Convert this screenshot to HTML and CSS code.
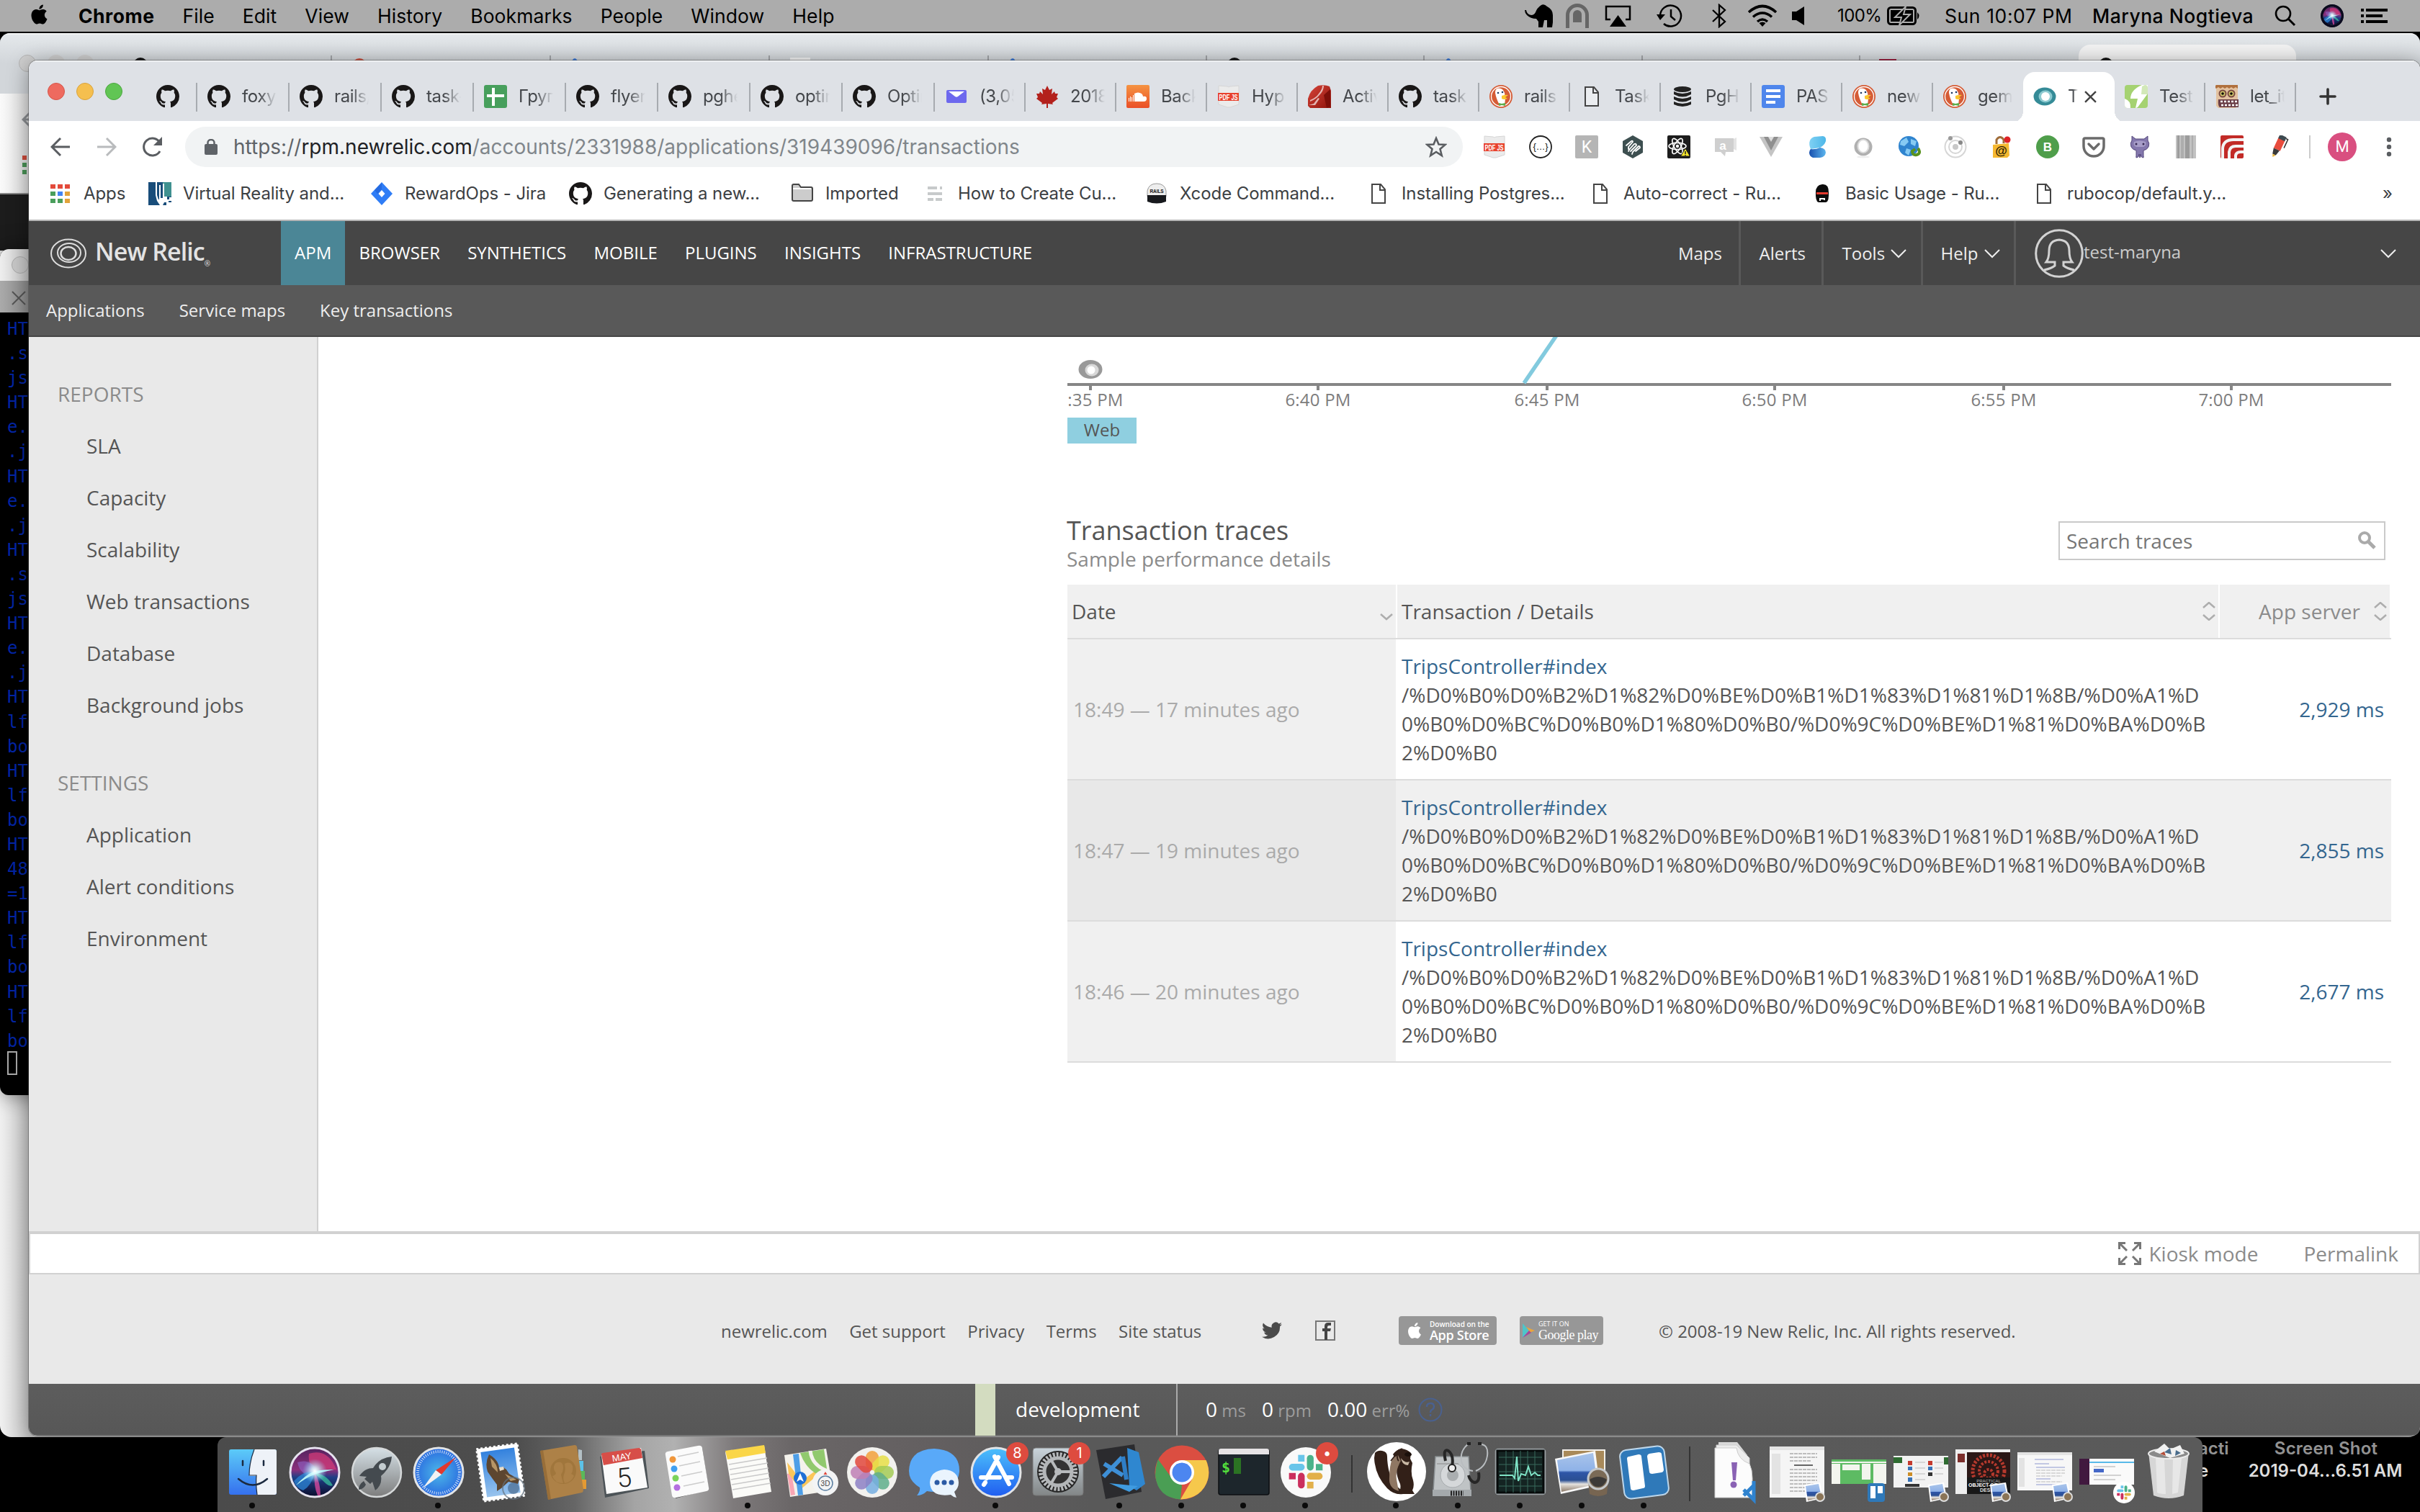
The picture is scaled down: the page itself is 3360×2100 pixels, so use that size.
FILE: index.html
```html
<!DOCTYPE html>
<html lang="en">
<head>
<meta charset="utf-8">
<title>Transactions - New Relic</title>
<link rel="stylesheet" href="styles.css">
</head>
<body>
<svg class="sprite" aria-hidden="true">
  <defs>
    <linearGradient id="gBlue" x1="0" y1="0" x2="0" y2="1"><stop offset="0" stop-color="#4cc0fb"/><stop offset="1" stop-color="#1f5cf0"/></linearGradient>
    <radialGradient id="gSafari"><stop offset="0" stop-color="#4cb8e8"/><stop offset="1" stop-color="#2a6be0"/></radialGradient>
    <linearGradient id="gFinder" x1="0" y1="0" x2="0" y2="1"><stop offset="0" stop-color="#5ccbf8"/><stop offset="1" stop-color="#3570ee"/></linearGradient>
    <linearGradient id="gSilver" x1="0" y1="0" x2="0" y2="1"><stop offset="0" stop-color="#d5e0e6"/><stop offset="1" stop-color="#7d7d7d"/></linearGradient>
    <linearGradient id="gSky" x1="0" y1="0" x2="0" y2="1"><stop offset="0" stop-color="#2f7fdd"/><stop offset="1" stop-color="#9cc6ee"/></linearGradient>
    <linearGradient id="gPhoto" x1="0" y1="0" x2="0" y2="1"><stop offset="0" stop-color="#a9c4ea"/><stop offset=".45" stop-color="#8fb2e8"/><stop offset=".5" stop-color="#2f56a8"/><stop offset=".7" stop-color="#2b4f93"/><stop offset=".8" stop-color="#e6e3df"/><stop offset="1" stop-color="#8d7a68"/></linearGradient>
    <linearGradient id="gVue" x1="0" y1="0" x2="1" y2="0"><stop offset="0" stop-color="#1850ae"/><stop offset="1" stop-color="#5cb6ee"/></linearGradient>
    <linearGradient id="gVueTop" x1="0" y1="0" x2="1" y2="0"><stop offset="0" stop-color="#7fd0f3"/><stop offset="1" stop-color="#4db7e8"/></linearGradient>
    <linearGradient id="gOrange" x1="0" y1="0" x2="0" y2="1"><stop offset="0" stop-color="#f59342"/><stop offset="1" stop-color="#ea4f27"/></linearGradient>
    <linearGradient id="gRuby" x1="0" y1="0" x2="1" y2="1"><stop offset="0" stop-color="#d8453a"/><stop offset="1" stop-color="#8e130b"/></linearGradient>
    <linearGradient id="gGear" x1="0" y1="0" x2="0" y2="1"><stop offset="0" stop-color="#c9d4db"/><stop offset="1" stop-color="#828687"/></linearGradient>
    <radialGradient id="gGlow"><stop offset="0" stop-color="#fff"/><stop offset=".3" stop-color="#d7fbff" stop-opacity=".8"/><stop offset="1" stop-color="#7fd8ff" stop-opacity="0"/></radialGradient>
    <linearGradient id="gSiri" x1="0" y1="0" x2="0" y2="1"><stop offset="0" stop-color="#54235e"/><stop offset=".45" stop-color="#8a2f7c"/><stop offset=".6" stop-color="#1f3f86"/><stop offset="1" stop-color="#0b0c2c"/></linearGradient>
  </defs>
  <symbol id="apple" viewBox="0 0 24 24"><path d="M12.152 6.896c-.948 0-2.415-1.078-3.96-1.04-2.04.027-3.91 1.183-4.961 3.014-2.117 3.675-.546 9.103 1.519 12.09 1.013 1.454 2.208 3.09 3.792 3.039 1.52-.065 2.09-.987 3.935-.987 1.831 0 2.35.987 3.96.948 1.637-.026 2.676-1.48 3.676-2.948 1.156-1.688 1.636-3.325 1.662-3.415-.039-.013-3.182-1.221-3.22-4.857-.026-3.04 2.48-4.494 2.597-4.559-1.429-2.09-3.623-2.324-4.39-2.376-2-.156-3.675 1.09-4.61 1.09zM15.53 3.83c.843-1.012 1.4-2.427 1.245-3.83-1.207.052-2.662.805-3.532 1.818-.78.896-1.454 2.338-1.273 3.714 1.338.104 2.715-.688 3.559-1.701"/></symbol>
  <symbol id="github" viewBox="0 0 16 16"><path fill="#191717" d="M8 0C3.58 0 0 3.58 0 8c0 3.54 2.29 6.53 5.47 7.59.4.07.55-.17.55-.38 0-.19-.01-.82-.01-1.49-2.01.37-2.53-.49-2.69-.94-.09-.23-.48-.94-.82-1.13-.28-.15-.68-.52-.01-.53.63-.01 1.08.58 1.23.82.72 1.21 1.87.87 2.33.66.07-.52.28-.87.51-1.07-1.78-.2-3.64-.89-3.64-3.95 0-.87.31-1.59.82-2.15-.08-.2-.36-1.02.08-2.12 0 0 .67-.21 2.2.82.64-.18 1.32-.27 2-.27s1.36.09 2 .27c1.53-1.04 2.2-.82 2.2-.82.44 1.1.16 1.92.08 2.12.51.56.82 1.27.82 2.15 0 3.07-1.87 3.75-3.65 3.95.29.25.54.73.54 1.48 0 1.07-.01 1.93-.01 2.2 0 .21.15.46.55.38A8.01 8.01 0 0 0 16 8c0-4.42-3.58-8-8-8z"/></symbol>
  <symbol id="sheets" viewBox="0 0 32 32"><rect width="32" height="32" rx="3" fill="#479f5c"/><path d="M11 4h4v9h13v4H15v12h-4V17H4v-4h7z" fill="#fff"/></symbol>
  <symbol id="mailtab" viewBox="0 0 32 32"><rect x="2" y="7" width="28" height="18" rx="2" fill="#6d68ee"/><path d="M5 9h22l-9 7q-2 1.500-4 0z" fill="#fff"/></symbol>
  <symbol id="maple" viewBox="0 0 32 32"><path fill="#b3211c" d="M16 1l3 6 4-2-1 8 4-4 1 3 4 0-2 5 2 2-8 6 1 2-7-1v6h-2v-6l-7 1 1-2-8-6 2-2-2-5 4 0 1-3 4 4-1-8 4 2z"/></symbol>
  <symbol id="cloud" viewBox="0 0 32 32"><rect width="32" height="32" rx="2" fill="url(#gOrange)"/><path fill="#fff" d="M3 18h1v5H3zM5 16h1v7H5zM7 17h1v6H7zM9 14h1v9H9zM11 12q5-3 10 0 2 2 2 4 5-1 5 3 0 4-4 4H11z"/></symbol>
  <symbol id="pdfjs" viewBox="0 0 32 32"><path fill="#ebebeb" stroke="#d5d5d5" d="M2 1l12 1 2 1 2-1 12-1v26l-12 4h-4L2 27z"/><rect x="1" y="11" width="29" height="11" fill="#e8412c"/><text x="15.500" y="20.500" text-anchor="middle" font-family="Liberation Sans" font-weight="700" font-size="11" textLength="26" lengthAdjust="spacingAndGlyphs" fill="#fff">PDF JS</text></symbol>
  <symbol id="ruby" viewBox="0 0 32 32"><path fill="url(#gRuby)" d="M14 1q9-2 16 1l2 6v24H3l-3-3V19q3-12 14-18z"/><path fill="#fff" fill-opacity=".65" d="M3 21q8-3 12-9 5-6 5-11l2 0q0 7-6 13-5 6-13 9zM1 28l7-2 6-8 2 1-6 9z"/><path fill="#7d0f09" d="M22 14l9-8v24l-5 2z"/></symbol>
  <symbol id="duck" viewBox="0 0 32 32"><circle cx="16" cy="16" r="16" fill="#d55c36"/><circle cx="16" cy="16" r="13.500" fill="none" stroke="#fff" stroke-width="1.300"/><path fill="#fff" d="M10 5q8-2 11 6l1 8-1 9q-4 2-7 0Q9 18 8 11q0-4 2-6z"/><path fill="#fbc62d" d="M17 15q6-2 9-1l-4 3 3 2q-5 2-8 0z"/><circle cx="12" cy="11" r="1.300" fill="#1f3a63"/><circle cx="18" cy="10" r="1.300" fill="#1f3a63"/><path fill="#5cae4d" d="M13 25l4 1 5-1v4l-5-1-4 1z"/></symbol>
  <symbol id="doc" viewBox="0 0 32 32"><path fill="#fff" fill-opacity=".4" stroke="#444" stroke-width="2" d="M7 3h12l6 7v19H7z"/><path fill="none" stroke="#444" stroke-width="2" d="M18 3v8h7"/></symbol>
  <symbol id="db" viewBox="0 0 32 32"><g fill="#222"><ellipse cx="16" cy="6" rx="12" ry="4"/><path d="M4 9q12 6 24 0v4q-12 7-24 0zM4 16q12 6 24 0v4q-12 7-24 0zM4 23q12 6 24 0v4q-12 6-24 0z"/></g></symbol>
  <symbol id="gdoc" viewBox="0 0 32 32"><rect width="32" height="32" rx="3" fill="#4f86ec"/><path d="M6 6h20v4H6zM6 14h20v4H6zM6 22h13v4H6z" fill="#fff"/></symbol>
  <symbol id="relic" viewBox="0 0 32 32"><ellipse cx="16" cy="16" rx="15.500" ry="12.500" fill="#358b97"/><ellipse cx="17" cy="16" rx="9.500" ry="8.500" fill="#8ccad0"/><ellipse cx="17" cy="16" rx="6" ry="6" fill="#fff"/></symbol>
  <symbol id="bolt" viewBox="0 0 32 32"><rect width="32" height="32" rx="4" fill="#a5d271"/><path fill="#fff" d="M24 0h8v12L18 31q-2 1-3 1l3-13H8Q8 7 24 0zM0 19q9 3 8 13H4q-4 0-4-4z"/><path fill="#a5d271" d="M24 2l-1 11h9v-9q0-4-4-4z" fill-opacity=".5"/></symbol>
  <symbol id="monster" viewBox="0 0 32 32"><path fill="#e3c2a0" d="M1 3h30v26l-3 3H4l-3-3z"/><path fill="#b0703d" d="M1 0h30v5l-3-2-3 2-3-2-3 2-3-2-3 2-3-2-3 2-3-2-3 2-3-2z"/><circle cx="10" cy="12" r="4.500" fill="#cfc46b" stroke="#7b4b41" stroke-width="2"/><circle cx="22" cy="12" r="4.500" fill="#cfc46b" stroke="#7b4b41" stroke-width="2"/><circle cx="10" cy="12" r="1.800"/><circle cx="22" cy="12" r="1.800"/><path fill="#6b4048" d="M4 20h28v11H6q-3-2-2-11z"/><path stroke="#fff" stroke-width="2.500" stroke-dasharray="3 2" d="M7 23h24M8 28h24"/></symbol>
  <symbol id="jira" viewBox="0 0 32 32"><path fill="#2f7df6" fill-rule="evenodd" d="M16 0l15 16-15 16L1 16zm0 11l-4.500 5 4.500 5 4.500-5z"/><path fill="#1c57c9" d="M16 1v9l-6 6-4-5z" fill-opacity=".5"/></symbol>
  <symbol id="folder" viewBox="0 0 32 32"><path fill="#ccc" stroke="#444" stroke-width="2" d="M2 5q0-2 2-2h7l3 4h14q2 0 2 2v15q0 2-2 2H4q-2 0-2-2z"/><path fill="#fff" d="M3 8h25v2H3z"/></symbol>
  <symbol id="vr" viewBox="0 0 32 32"><rect width="32" height="32" fill="#194d7a"/><path fill="#3f9190" d="M20 0h12v20H20z"/><path fill="#fff" d="M10 0h2v18l2 6h1V4h2v18h3V2h2v18h4v4h3v-3h3v5h-4v6h-3v-4h-3l-2 4h-4l-4-6-2-8zM26 28h6v4h-6z"/></symbol>
  <symbol id="lines" viewBox="0 0 32 32"><path fill="#c7cacb" d="M6 6h13v4H6zM23 6h3v4h-3zM6 14h20v4H6zM6 22h8v4H6zM17 22h9v4h-9z"/></symbol>
  <symbol id="cap" viewBox="0 0 32 32"><path fill="#eee" stroke="#999" d="M3 20V12Q5 2 16 2t13 10v8z"/><path fill="#17191d" d="M3 18h26v9q-13 5-26 0z"/><text x="16" y="15" text-anchor="middle" font-family="Liberation Sans" font-weight="700" font-size="6.500" fill="#111">RAILS</text></symbol>
  <symbol id="robo" viewBox="0 0 32 32"><path fill="#0c0c0c" d="M7 14Q7 4 16 3t9 11v5q0 5-2 8l-2 1H11l-2-1q-2-4-2-8z"/><path fill="#e43a2d" d="M8 14h16v3H8z"/><path fill="#fff" d="M12 22h8v3h-2v-1h-4v2h-2z"/></symbol>
  <symbol id="braces" viewBox="0 0 32 32"><circle cx="16" cy="16" r="15" fill="#fff" stroke="#222" stroke-width="1.800"/><text x="16" y="20" text-anchor="middle" font-family="Liberation Sans" font-size="13" textLength="21" fill="#222">{...}</text></symbol>
  <symbol id="kbox" viewBox="0 0 32 32"><rect width="32" height="32" rx="2" fill="#b5b5b5"/><text x="16" y="24" text-anchor="middle" font-family="Roboto" font-size="23" fill="#fff">K</text></symbol>
  <symbol id="hex" viewBox="0 0 32 32"><path fill="#3d4f50" d="M16 0l14 8v16l-14 8-14-8V8z"/><path fill="none" stroke="#fff" stroke-width="1.800" stroke-linecap="round" d="M7 14l7-6q2-1 2 1l-6 7v3M10 22l1-2 7-8q3-1 3 2l-8 8M15 26l1-3 8-8q2 0 2 2l-6 5"/></symbol>
  <symbol id="react" viewBox="0 0 32 32"><rect width="32" height="32" rx="2" fill="#1c1c1c"/><g fill="none" stroke="#fff" stroke-width="1.600"><ellipse cx="14" cy="15" rx="12" ry="4.600"/><ellipse cx="14" cy="15" rx="12" ry="4.600" transform="rotate(60 14 15)"/><ellipse cx="14" cy="15" rx="12" ry="4.600" transform="rotate(120 14 15)"/></g><circle cx="14" cy="15" r="2.200" fill="#fff"/><path fill="#f5e62c" stroke="#1c1c1c" d="M25 18l6.500 11h-13z"/><path stroke="#222" stroke-width="1.500" d="M25 22v4M25 27v1.500"/></symbol>
  <symbol id="abox" viewBox="0 0 32 32"><path fill="#cfcfcf" d="M2 4h26v19H17l-1 6-6-6H2z"/><path fill="#e3e3e3" d="M28 5l4-2v18l-4-2z"/><text x="13" y="20" text-anchor="middle" font-family="Liberation Sans" font-weight="700" font-size="17" fill="#fff">a</text></symbol>
  <symbol id="vue" viewBox="0 0 32 32"><path fill="#c4c4c4" d="M0 2h32L16 30z"/><path fill="#8f8f8f" d="M6 2h20L16 21z"/><path fill="#ddd" d="M12 2h8l-4 7z"/></symbol>
  <symbol id="bluek" viewBox="0 0 32 32"><path fill="url(#gVueTop)" d="M12 2l12-1q5 1 4 7-2 6-8 9l-13 2Q4 12 6 7q2-4 6-5z"/><path fill="url(#gVue)" d="M7 19q7 1 13-2 8 1 8 7-1 6-8 7H10q-5-2-5-7 0-3 2-5z"/></symbol>
  <symbol id="opera" viewBox="0 0 32 32"><ellipse cx="16" cy="16" rx="12.500" ry="12.500" fill="#b0b0b0"/><ellipse cx="16" cy="15" rx="7.500" ry="9" fill="#fff" stroke="#dcdcdc" stroke-width="2"/><ellipse cx="16" cy="30" rx="9" ry="1.500" fill="#eee"/></symbol>
  <symbol id="globe" viewBox="0 0 32 32"><circle cx="15" cy="15" r="14" fill="#2f84cf"/><path fill="#86caf3" d="M4 8l8-5 3 6-6 6-6-2zM18 5l8 3-2 7-6-3zM12 18l6 2-3 8-5-4z"/><path fill="none" stroke="#5a921f" stroke-width="4" d="M28 18q5 7-2 9-6 1-6-5l4-3"/></symbol>
  <symbol id="orbit" viewBox="0 0 32 32"><g fill="none" stroke="#d6d6d6" stroke-width="2"><circle cx="16" cy="16" r="14.500"/><circle cx="16" cy="16" r="9"/></g><circle cx="16" cy="16" r="4" fill="#c8c8c8"/><circle cx="9" cy="4" r="3" fill="#999"/><circle cx="23" cy="10" r="3" fill="#888"/></symbol>
  <symbol id="lockat" viewBox="0 0 32 32"><path fill="none" stroke="#a06d3a" stroke-width="3" d="M9 12V6q5-7 10 0v5"/><path d="M4 13l22-2 1 17-3 3H4z" fill="#f5b931"/><circle cx="24" cy="6" r="4.500" fill="#de2226"/><text x="15.500" y="27" text-anchor="middle" font-family="Liberation Sans" font-weight="700" font-size="17" fill="#2b1d05">@</text></symbol>
  <symbol id="bgreen" viewBox="0 0 32 32"><circle cx="16" cy="16" r="16" fill="#4f9e4b"/><text x="16" y="22" text-anchor="middle" font-family="Liberation Sans" font-weight="700" font-size="17" fill="#fff">B</text></symbol>
  <symbol id="pocket" viewBox="0 0 32 32"><path fill="none" stroke="#6b6b6b" stroke-width="3.500" d="M4 4h24q2 0 2 2v9a14 14 0 0 1-28 0V6q0-2 2-2z"/><path fill="none" stroke="#6b6b6b" stroke-width="3.500" stroke-linecap="round" stroke-linejoin="round" d="M9 12l7 7 7-7"/></symbol>
  <symbol id="octocat" viewBox="0 0 32 32"><path fill="#8478ad" stroke="#55487c" d="M5 1l5 4h12l5-4v6q3 4 1 9-2 4-7 5v8q1 2-1 2-3-1-3-5 0 5-1 5t-1-5q0 4-3 5-2 0-1-2v-8q-5-1-7-5-2-5 1-9z"/><path fill="#a79dc8" d="M8 9q8-3 16 0 2 5-3 7H11q-5-2-3-7z"/><circle cx="11" cy="12" r="1.500" fill="#372b54"/><circle cx="21" cy="12" r="1.500" fill="#372b54"/></symbol>
  <symbol id="bars" viewBox="0 0 32 32"><path fill="#c2c2c2" d="M2 0h28v32H2z"/><path fill="#9c9c9c" d="M4 0h3v32H4zM15 0h6v32h-6z"/><path fill="#adadad" d="M9 0h4v32H9zM24 0h2v32h-2z"/></symbol>
  <symbol id="redarc" viewBox="0 0 32 32"><rect width="32" height="32" rx="2" fill="#c22b27"/><path fill="none" stroke="#f3f3f3" stroke-width="4" d="M3 32V18Q4 6 18 6h14M12 32V23q1-8 9-8h11M21 32v-4q1-5 7-5h4"/></symbol>
  <symbol id="marker" viewBox="0 0 32 32"><g transform="rotate(25 16 16)"><rect x="11" y="4" width="10" height="16" fill="#e84c3d"/><rect x="11" y="-1" width="10" height="6" fill="#3d4a50"/><path fill="#3a3a3a" d="M11 20h9l-2 8h-5z"/><path fill="#e9b53b" d="M13 28h5l-3 4z"/><path fill="none" stroke="#333" stroke-width="1.500" d="M21 1h3v13"/></g></symbol>
  <symbol id="elephant" viewBox="0 0 40 32"><path d="M0 8l2 0q1 6 7 7 4 0 6-4 2-6 8-10 4-2 8 2 8 4 8 12v10l-1 7h-7v-10h-4l-2 10h-6v-8l-3-4q-8 0-13-5Q0 12 0 8z"/></symbol>
  <symbol id="updown" viewBox="0 0 18 26"><path fill="none" stroke="#adadad" stroke-width="2.500" d="M1 8l8-7 8 7M1 18l8 7 8-7"/></symbol>
  <symbol id="chev" viewBox="0 0 22 14"><path fill="none" stroke="currentColor" stroke-width="2" d="M1 2l10 10L21 2"/></symbol>
  <symbol id="siri" viewBox="0 0 76 76"><circle cx="38" cy="38" r="34" fill="url(#gSiri)" stroke="#e6e3ef" stroke-width="3"/><path fill="#d13b78" fill-opacity=".75" d="M30 12q26-8 38 22-14-2-30 4Q28 26 30 12z"/><path fill="#8f6ad0" fill-opacity=".55" d="M14 24q18-6 28 12l-4 6Q18 44 14 24z"/><path fill="#2a7fd0" fill-opacity=".8" d="M9 50q14-16 29-12-4 18-16 25-10-3-13-13z"/><path fill="#37b59b" fill-opacity=".8" d="M36 38q18 2 27 18-4 2-9-2-8-8-18-16z"/><path fill="#e24aa0" fill-opacity=".75" d="M38 38q8 14 8 32h-4q-6-14-4-32z"/><path fill="#baf3f4" d="M12 56q12-14 26-20 12-2 27-2-14 3-25 6-14 5-28 16z"/><circle cx="38" cy="36" r="17" fill="url(#gGlow)"/></symbol>
  <symbol id="previewmini" viewBox="0 0 30 30"><path fill="#fff" d="M1 4l22-3 4 22-23 5z"/><path fill="url(#gPhoto)" d="M3 6l18-3 4 19-19 4z"/><circle cx="23" cy="21" r="6" fill="#8a7457" stroke="#ddd" stroke-width="2"/></symbol>
  <symbol id="slackmark" viewBox="0 0 54 54"><g fill="none" stroke-width="10.500" stroke-linecap="round"><path stroke="#68c5ea" d="M6 20h14"/><path stroke="#68c5ea" stroke-linecap="butt" d="M15 6h10"/><path stroke="#4bb28a" d="M34 6v14"/><path stroke="#4bb28a" stroke-linecap="butt" d="M48 15v10"/><path stroke="#e2b04a" d="M34 34h14"/><path stroke="#e2b04a" stroke-linecap="butt" d="M29 48h10"/><path stroke="#cb2f5d" d="M20 34v14"/><path stroke="#cb2f5d" stroke-linecap="butt" d="M6 29v10"/></g></symbol>
</svg>

<header class="menubar">
  <svg class="apple-logo" width="27" height="32"><use href="#apple"/></svg>
  <nav class="menus"><b>Chrome</b><span>File</span><span>Edit</span><span>View</span><span>History</span><span>Bookmarks</span><span>People</span><span>Window</span><span>Help</span></nav>
  <div class="status">
    <svg width="40" height="32"><use href="#elephant"/></svg>
    <svg width="32" height="34" viewBox="0 0 32 34"><path fill="none" stroke="#666" stroke-width="5" d="M2.500 34V16a13.500 13.500 0 0 1 27 0v18"/><path fill="#666" d="M10 26V15a6 6 0 0 1 12 0v11z"/></svg>
    <svg width="37" height="30" viewBox="0 0 37 30"><path fill="none" stroke="#000" stroke-width="2.500" d="M8 20H2V2h33v18h-6"/><path d="M18.500 14L30 30H7z"/></svg>
    <svg width="36" height="34" viewBox="0 0 36 34"><path fill="none" stroke="#000" stroke-width="2.500" d="M5 17a14.500 14.500 0 1 1 5 11M20 8v10l6 5"/><path d="M0 15h12l-7 8z"/></svg>
    <svg width="20" height="34" viewBox="0 0 20 34"><path fill="none" stroke="#000" stroke-width="2.300" d="M1 9l17 16-8 7V2l8 7L1 25"/></svg>
    <svg width="42" height="32" viewBox="0 0 42 32"><g fill="none" stroke="#000" stroke-width="3.600"><path d="M2 11q19-17 38 0M8 17.500q13-11 26 0M14 24q7-6 14 0"/></g><path d="M16.500 26q4.500-3 9 0L21 31z"/></svg>
    <svg width="18" height="26" viewBox="0 0 18 26"><path d="M0 7h6l11-7v26L6 19H0z"/></svg>
    <span class="battery-pct">100%</span>
    <svg width="48" height="26" viewBox="0 0 48 26"><rect x="1.500" y="1.500" width="38" height="23" rx="4" fill="none" stroke="#000" stroke-width="3"/><rect x="5" y="5" width="31" height="16"/><path d="M42 8q5 5 0 10z"/><path fill="#000" stroke="#acacac" stroke-width="2" d="M26 0L11 15h9l-3 11 15-15h-9z"/></svg>
    <span class="clock">Sun 10:07 PM</span>
    <span class="user">Maryna Nogtieva</span>
    <svg width="30" height="30" viewBox="0 0 30 30"><circle cx="12" cy="12" r="10" fill="none" stroke="#000" stroke-width="2.600"/><path stroke="#000" stroke-width="3" d="M19 19l9 9"/></svg>
    <svg width="32" height="32" viewBox="0 0 32 32"><circle cx="16" cy="16" r="16" fill="#0a0a1e"/><use href="#siri" x="1" y="1" width="30" height="30"/><circle cx="16" cy="16" r="14" fill="none" stroke="#0a0a1e" stroke-width="3"/></svg>
    <svg width="37" height="20" viewBox="0 0 37 20"><path d="M0 0h4v4H0zM7 0h30v4H7zM0 8h4v4H0zM7 8h23v4H7zM0 16h4v4H0zM7 16h30v4H7z"/></svg>
  </div>
</header>

<section class="win back-window">
  <div class="back-tabs">
    <i class="back-light"></i>
    <span></span><span><i class="peek dark"></i></span><span><i class="peek red"></i></span><span><i class="peek blue"></i></span><span><i class="peek white"></i></span><span><i class="peek blue"></i></span><span><i class="peek dark"></i></span><span><i class="peek blue"></i></span><span></span><span class="last"><i class="peek crimson"></i></span><span class="front"><i class="peek dark"></i></span>
  </div>
  <div class="back-tools"><svg width="20" height="170" viewBox="0 0 20 170"><path fill="none" stroke="#8b8e92" stroke-width="3" d="M12 26L2 36l10 10M2 36h18"/><path fill="#ce4b3b" d="M1 86h6v6H1z"/><path fill="#4a9457" d="M1 96h6v6H1zM1 106h6v6H1z"/></svg></div>
  <div class="back-dark"></div>
</section>

<section class="win terminal">
  <div class="term-title"><i></i></div>
  <div class="term-tab"><svg width="20" height="20" viewBox="0 0 20 20"><path stroke="#555" stroke-width="2" d="M1 1l18 18M19 1L1 19"/></svg></div>
<pre>HT
.s
js
HT
e.
.j
HT
e.
.j
HT
.s
js
HT
e.
.j
HT
lf
bo
HT
lf
bo
HT
48
=1
HT
lf
bo
HT
lf
bo</pre>
  <i class="cursor"></i>
</section>

<main class="win browser">
  <div class="tabstrip">
    <div class="lights"><i class="r"></i><i class="y"></i><i class="g"></i></div>
    <div class="tab pinned"><svg><use href="#github"/></svg></div>
    <div class="tab"><svg><use href="#github"/></svg><span>foxy</span></div>
    <div class="tab"><svg><use href="#github"/></svg><span>rails/</span></div>
    <div class="tab"><svg><use href="#github"/></svg><span>task-</span></div>
    <div class="tab"><svg><use href="#sheets"/></svg><span>Групп</span></div>
    <div class="tab"><svg><use href="#github"/></svg><span>flyers</span></div>
    <div class="tab"><svg><use href="#github"/></svg><span>pghe</span></div>
    <div class="tab"><svg><use href="#github"/></svg><span>optim</span></div>
    <div class="tab"><svg><use href="#github"/></svg><span>Optim</span></div>
    <div class="tab narrow"><svg><use href="#mailtab"/></svg><span>(3,05</span></div>
    <div class="tab narrow"><svg><use href="#maple"/></svg><span>2018</span></div>
    <div class="tab narrow"><svg><use href="#cloud"/></svg><span>Back</span></div>
    <div class="tab narrow"><svg><use href="#pdfjs"/></svg><span>Hyp</span></div>
    <div class="tab narrow"><svg><use href="#ruby"/></svg><span>Activ</span></div>
    <div class="tab narrow"><svg><use href="#github"/></svg><span>task</span></div>
    <div class="tab narrow"><svg><use href="#duck"/></svg><span>rails</span></div>
    <div class="tab narrow"><svg><use href="#doc"/></svg><span>Task</span></div>
    <div class="tab narrow"><svg><use href="#db"/></svg><span>PgH</span></div>
    <div class="tab narrow"><svg><use href="#gdoc"/></svg><span>PAS</span></div>
    <div class="tab narrow"><svg><use href="#duck"/></svg><span>new</span></div>
    <div class="tab narrow before"><svg><use href="#duck"/></svg><span>gem</span></div>
    <div class="tab current"><svg><use href="#relic"/></svg><span>T</span><svg class="close" viewBox="0 0 16 16"><path stroke="#444" stroke-width="2.300" d="M1 1l14 14M15 1L1 15"/></svg></div>
    <div class="tab narrow"><svg><use href="#bolt"/></svg><span>Test</span></div>
    <div class="tab narrow"><svg><use href="#monster"/></svg><span>let_it</span></div>
    <svg class="plus" width="24" height="24" viewBox="0 0 24 24"><path stroke="#333" stroke-width="3.600" stroke-linecap="round" d="M12 2v20M2 12h20"/></svg>
  </div>
  <div class="toolbar">
    <svg width="28" height="28" viewBox="0 0 28 28"><path fill="none" stroke="#5a5d61" stroke-width="3" d="M14 2L2 14l12 12M2 14h25"/></svg>
    <svg width="28" height="28" viewBox="0 0 28 28"><path fill="none" stroke="#b9bbbd" stroke-width="3" d="M14 2l12 12-12 12M26 14H1"/></svg>
    <svg width="28" height="28" viewBox="0 0 28 28"><path fill="none" stroke="#5a5d61" stroke-width="3" d="M24 20a12 12 0 1 1 0-12"/><path fill="#5a5d61" d="M27 0v12H15z"/></svg>
    <div class="omnibox">
      <svg width="18" height="22" viewBox="0 0 18 22"><rect y="7" width="18" height="15" rx="2" fill="#5f6368"/><path fill="none" stroke="#5f6368" stroke-width="2.500" d="M4.500 8V5a4.500 4 0 0 1 9 0v3"/></svg>
      <p>https://<b>rpm.newrelic.com</b><span>/accounts/2331988/applications/319439096/transactions</span></p>
      <svg width="30" height="30" viewBox="0 0 30 30"><path fill="none" stroke="#5a5d61" stroke-width="2.600" d="M15 3l3.500 8.500 9 .5-7 6 2.300 9L15 22l-7.800 5 2.300-9-7-6 9-.5z"/></svg>
    </div>
    <div class="extensions">
      <svg><use href="#pdfjs"/></svg><svg><use href="#braces"/></svg><svg><use href="#kbox"/></svg><svg><use href="#hex"/></svg><svg><use href="#react"/></svg><svg><use href="#abox"/></svg><svg><use href="#vue"/></svg><svg><use href="#bluek"/></svg><svg><use href="#opera"/></svg><svg><use href="#globe"/></svg><svg><use href="#orbit"/></svg><svg><use href="#lockat"/></svg><svg><use href="#bgreen"/></svg><svg><use href="#pocket"/></svg><svg><use href="#octocat"/></svg><svg><use href="#bars"/></svg><svg><use href="#redarc"/></svg><svg><use href="#marker"/></svg>
    </div>
    <i class="tool-sep"></i><span class="profile">M</span>
    <svg width="8" height="28" viewBox="0 0 8 28"><g fill="#5a5d61"><circle cx="4" cy="4" r="3.200"/><circle cx="4" cy="14" r="3.200"/><circle cx="4" cy="24" r="3.200"/></g></svg>
  </div>
  <div class="bookmarks">
    <div class="bm apps"><svg viewBox="0 0 28 28"><path fill="#e34a3b" d="M0 1h7v6H0zM10 1h7v6h-7zM20 1h7v6h-7z"/><path fill="#4a9e5c" d="M0 11h7v6H0zM0 21h7v6H0zM10 21h7v6h-7z"/><path fill="#4285f4" d="M10 11h7v6h-7z"/><path fill="#e2a33b" d="M20 11h7v6h-7zM20 21h7v6h-7z"/></svg><span>Apps</span></div>
    <div class="bm"><svg><use href="#vr"/></svg><span>Virtual Reality and...</span></div>
    <div class="bm jira"><svg><use href="#jira"/></svg><span>RewardOps - Jira</span></div>
    <div class="bm"><svg><use href="#github"/></svg><span>Generating a new...</span></div>
    <div class="bm imported"><svg><use href="#folder"/></svg><span>Imported</span></div>
    <div class="bm"><svg><use href="#lines"/></svg><span>How to Create Cu...</span></div>
    <div class="bm"><svg><use href="#cap"/></svg><span>Xcode Command...</span></div>
    <div class="bm"><svg><use href="#doc"/></svg><span>Installing Postgres...</span></div>
    <div class="bm"><svg><use href="#doc"/></svg><span>Auto-correct - Ru...</span></div>
    <div class="bm"><svg><use href="#robo"/></svg><span>Basic Usage - Ru...</span></div>
    <div class="bm"><svg><use href="#doc"/></svg><span>rubocop/default.y...</span></div>
    <span class="more">»</span>
  </div>

  <div class="topnav">
    <div class="brand"><svg width="50" height="42" viewBox="0 0 50 42"><g fill="none" stroke="#ddd" stroke-width="2"><ellipse cx="25" cy="21" rx="24" ry="19.500"/><ellipse cx="26" cy="20" rx="16" ry="13"/><ellipse cx="25" cy="21" rx="10.500" ry="9" stroke-width="2.500"/></g></svg><b>New Relic</b><small>®</small></div>
    <nav><a class="on">APM</a><a>BROWSER</a><a>SYNTHETICS</a><a>MOBILE</a><a>PLUGINS</a><a>INSIGHTS</a><a>INFRASTRUCTURE</a></nav>
    <div class="utils"><a>Maps</a><a>Alerts</a><a>Tools<svg width="22" height="14"><use href="#chev"/></svg></a><a>Help<svg width="22" height="14"><use href="#chev"/></svg></a>
      <div class="account"><svg width="68" height="68" viewBox="0 0 68 68"><g fill="none" stroke="#d2d2d2" stroke-width="3"><circle cx="34" cy="34" r="32.300"/><path d="M13 57q10-2 15-6v-5H16q4-5 4-16 0-14 14-15 14 1 14 15 0 11 4 16H40v5q5 4 15 6"/></g></svg><span>test-maryna</span><svg width="22" height="14"><use href="#chev"/></svg></div>
    </div>
  </div>
  <div class="subnav"><a>Applications</a><a>Service maps</a><a>Key transactions</a></div>

  <div class="content">
    <aside>
      <h3>REPORTS</h3><a>SLA</a><a>Capacity</a><a>Scalability</a><a>Web transactions</a><a>Database</a><a>Background jobs</a>
      <h3 class="second">SETTINGS</h3><a>Application</a><a>Alert conditions</a><a>Environment</a>
    </aside>
    <article>
      <svg class="chart" width="1840" height="108" viewBox="0 0 1840 108">
        <path fill="#868686" d="M0 64h1838v4H0zM30 68h4v6h-4zM346 68h4v6h-4zM664 68h4v6h-4zM980 68h4v6h-4zM1298 68h4v6h-4zM1614 68h4v6h-4z"/>
        <path stroke="#82cade" stroke-width="5.500" d="M634 64L679-2"/>
        <ellipse cx="32" cy="45" rx="16.500" ry="13" fill="#999"/><ellipse cx="34" cy="46" rx="9.500" ry="8.500" fill="#d8d8d8"/><ellipse cx="33" cy="46" rx="5.500" ry="5.500" fill="#fff"/>
        <g class="ticks"><text x="32" y="96">6:35 PM</text><text x="348" y="96">6:40 PM</text><text x="666" y="96">6:45 PM</text><text x="982" y="96">6:50 PM</text><text x="1300" y="96">6:55 PM</text><text x="1616" y="96">7:00 PM</text></g>
      </svg>
      <div class="legend">Web</div>
      <div class="section-head">
        <div><h2>Transaction traces</h2><p>Sample performance details</p></div>
        <div class="search">Search traces<svg width="26" height="26" viewBox="0 0 26 26"><circle cx="9" cy="9" r="7" fill="none" stroke="#aaa" stroke-width="4"/><path stroke="#aaa" stroke-width="5" d="M14 14l9 9"/></svg></div>
      </div>
      <div class="table">
        <div class="tr head"><div>Date<svg class="down" width="18" height="10" viewBox="0 0 18 10"><path fill="none" stroke="#adadad" stroke-width="2.500" d="M1 1l8 7 8-7"/></svg></div><div>Transaction / Details<svg width="18" height="26"><use href="#updown"/></svg></div><div class="srv">App server<svg width="18" height="26"><use href="#updown"/></svg></div></div>
        <div class="tr"><div class="date">18:49 — 17 minutes ago</div><div class="det"><a>TripsController#index</a><br>/%D0%B0%D0%B2%D1%82%D0%BE%D0%B1%D1%83%D1%81%D1%8B/%D0%A1%D<br>0%B0%D0%BC%D0%B0%D1%80%D0%B0/%D0%9C%D0%BE%D1%81%D0%BA%D0%B<br>2%D0%B0</div><div class="ms">2,929 ms</div></div>
        <div class="tr alt"><div class="date">18:47 — 19 minutes ago</div><div class="det"><a>TripsController#index</a><br>/%D0%B0%D0%B2%D1%82%D0%BE%D0%B1%D1%83%D1%81%D1%8B/%D0%A1%D<br>0%B0%D0%BC%D0%B0%D1%80%D0%B0/%D0%9C%D0%BE%D1%81%D0%BA%D0%B<br>2%D0%B0</div><div class="ms">2,855 ms</div></div>
        <div class="tr"><div class="date">18:46 — 20 minutes ago</div><div class="det"><a>TripsController#index</a><br>/%D0%B0%D0%B2%D1%82%D0%BE%D0%B1%D1%83%D1%81%D1%8B/%D0%A1%D<br>0%B0%D0%BC%D0%B0%D1%80%D0%B0/%D0%9C%D0%BE%D1%81%D0%BA%D0%B<br>2%D0%B0</div><div class="ms">2,677 ms</div></div>
      </div>
    </article>
  </div>

  <div class="kiosk"><svg width="32" height="32" viewBox="0 0 32 32"><g fill="none" stroke="#777" stroke-width="3"><path d="M1.500 10V1.500H10M2 2l10 10M22 1.500h8.500V10M30 2L20 12M1.500 22v8.500H10M2 30l10-10M22 30.500h8.500V22M30 30L20 20"/></g></svg><span>Kiosk mode</span><span class="permalink">Permalink</span></div>
  <footer>
    <div class="links"><a>newrelic.com</a><a>Get support</a><a>Privacy</a><a>Terms</a><a>Site status</a></div>
    <svg class="tw" width="28" height="26" viewBox="0 0 24 20"><path fill="#4a4a4a" d="M24 2.500a10 10 0 0 1-2.800.8A5 5 0 0 0 23.300.6a10 10 0 0 1-3.100 1.200A4.900 4.900 0 0 0 11.800 6.300 14 14 0 0 1 1.700 1.100a4.900 4.900 0 0 0 1.500 6.600A5 5 0 0 1 1 7.100a4.900 4.900 0 0 0 4 4.900 5 5 0 0 1-2.300.1 4.900 4.900 0 0 0 4.600 3.400A9.900 9.900 0 0 1 0 17.500 14 14 0 0 0 21.500 5 10 10 0 0 0 24 2.500z"/></svg>
    <svg class="fb" width="28" height="28" viewBox="0 0 28 28"><rect x="1" y="1" width="26" height="26" fill="none" stroke="#777" stroke-width="2"/><path fill="#444" d="M13 27V15h-3v-4h3V8q0-5 5-5h4v4h-3q-2 0-2 2v2h5l-1 4h-4v12z"/></svg>
    <div class="store"><svg width="22" height="26"><use href="#apple"/></svg><p><small>Download on the</small>App Store</p></div>
    <div class="store play"><svg width="18" height="20" viewBox="0 0 18 20"><path fill="#4fc4c9" d="M0 0l9 10-9 10z"/><path fill="#e8a53f" d="M5 5l12 5-12 5 4-5z"/><path fill="#a4479b" d="M0 20l9-10 3 3z"/></svg><p><small>GET IT ON</small>Google play</p></div>
    <span class="copy">© 2008-19 New Relic, Inc. All rights reserved.</span>
  </footer>
  <div class="metrics"><i class="health"></i><span class="env">development</span><i class="line"></i>
    <p><b>0</b> ms</p><p><b>0</b> rpm</p><p><b>0.00</b> err%</p>
    <svg width="34" height="34" viewBox="0 0 34 34"><circle cx="17" cy="17" r="15.500" fill="none" stroke="#4a618f" stroke-width="2"/><path fill="none" stroke="#4a618f" stroke-width="2.500" d="M12 13q0-5 5-5t5 4.500q0 3-3 4.500-2 1-2 4M17 23v3"/></svg>
  </div>
</main>

<div class="desktop-label one"><span>acti</span><span>e</span></div>
<div class="desktop-label two"><span>Screen Shot</span><span>2019-04...6.51 AM</span></div>

<section class="dock">
  <div class="app run"><svg viewBox="0 0 76 76"><rect x="5" y="6" width="66" height="63" rx="3" fill="url(#gFinder)"/><path fill="#eef2f8" d="M40 6h28q3 0 3 3v57q0 3-3 3H44q-2-12-1-26h-10Q33 24 40 6z"/><path fill="none" stroke="#1b2a40" stroke-width="2.500" stroke-linecap="round" d="M24 22v6M53 22v6M18 47q20 17 40 0"/><path fill="none" stroke="#1b2a40" stroke-width="1.200" d="M40 6q-7 18-7 36h10q-1 14 1 27"/></svg></div>
  <div class="app"><svg><use href="#siri"/></svg></div>
  <div class="app"><svg viewBox="0 0 76 76"><circle cx="38" cy="38" r="34" fill="url(#gSilver)" stroke="#d6d9da" stroke-width="2.500"/><path fill="#444a4f" d="M59 16q-18 2-26 16-12 0-19 11l10 1-3 3 8 7 3-3 4 12q10-8 8-20 14-12 15-27zM20 50q-7 5-7 12 7-1 10-7z"/><circle cx="46" cy="30" r="5" fill="#c3ccd0"/></svg></div>
  <div class="app run"><svg viewBox="0 0 76 76"><circle cx="38" cy="38" r="34" fill="url(#gSafari)" stroke="#e2e4e6" stroke-width="3"/><circle cx="38" cy="38" r="29" fill="none" stroke="#fff" stroke-opacity=".8" stroke-width="4" stroke-dasharray="1 2"/><path fill="#e3382e" d="M62 17L42 41l-8-6z"/><path fill="#f2f2f2" d="M16 60l18-25 8 6z"/></svg></div>
  <div class="app"><svg viewBox="0 0 76 76"><g transform="rotate(-8 38 38)"><rect x="12" y="4" width="52" height="68" fill="url(#gSky)" stroke="#fff" stroke-width="5"/><rect x="9" y="1" width="58" height="74" fill="none" stroke="#fff" stroke-width="2" stroke-dasharray="3 3"/></g><path fill="#5d4630" d="M22 13q14 8 14 20l6-2 4 3 4 6 14 8-2 6-13-3-10 9-6 4 0-9-6-8-7-10q-4-12 2-24z"/><path fill="#b79566" d="M24 18q10 8 10 20l-8-8zM44 40l16 8-8 2z"/><path fill="#e9ddc7" d="M36 31l6-1 1 4-6 2z"/><circle cx="56" cy="60" r="15" fill="none" stroke="#64727f" stroke-opacity=".7" stroke-width="2"/><circle cx="56" cy="60" r="8" fill="#4a6b8e" fill-opacity=".7"/></svg></div>
  <div class="app"><svg viewBox="0 0 76 76"><path fill="#b3c0c5" d="M60 6l5 1v14h-5z"/><path fill="#5cc2e8" d="M60 22h7v14h-7z"/><path fill="#5bb95a" d="M60 36h9v12h-9z"/><path fill="#e49a33" d="M60 48h11v13H60z"/><path fill="#ad8147" d="M7 8l48-8q2 0 3 2l9 60q0 3-2 4l-47 10z"/><path fill="#8e6733" d="M7 8l4-1 11 68-4 1z" fill-opacity=".7"/><circle cx="39" cy="36" r="18" fill="#a0763c"/><path fill="#ad8147" d="M31 24q8-2 8 8 0 5-3 9 1 5 3 12-12 0-15-10 4-1 5-4-4-5-3-9 1-5 5-6zM41 26q8-4 11 3 1 8-2 11 3 1 4 3-4 9-13 10-3-6-1-12 3-6 1-15z"/></svg></div>
  <div class="app"><svg viewBox="0 0 76 76"><path fill="#4c5357" d="M4 16l62-8 6 52-61 13z"/><path fill="#fafafa" d="M6 14l55-10 9 55-57 9z"/><path fill="#d74e48" d="M6 13q0-2 2-2L58 4q2 0 3 2l2 12-54 10z"/><text x="35" y="21" transform="rotate(-9 35 21)" text-anchor="middle" font-family="Liberation Sans" font-size="13" fill="#fff">MAY</text><text x="39" y="58" text-anchor="middle" font-family="Roboto" font-weight="300" font-size="37" fill="#222" transform="rotate(-6 39 58)">5</text></svg></div>
  <div class="app"><svg viewBox="0 0 76 76"><path fill="#333" d="M14 12l46-8 9 58-46 12z"/><path fill="#fbfbfb" d="M9 14q-1-4 3-5l42-8q5-1 6 3l9 55q1 4-3 5l-42 9q-5 1-6-3z"/><g stroke="#ccc" stroke-width="1.500"><path d="M26 16l29-6M28 29l29-6M31 43l29-6M34 57l29-6"/></g><circle cx="19" cy="20" r="4.500" fill="#f0973c"/><circle cx="21" cy="33" r="4.500" fill="#3f9ff0"/><circle cx="23" cy="46" r="4.500" fill="#7bd35a"/><circle cx="25" cy="59" r="4.500" fill="#b56fe0"/></svg></div>
  <div class="app run"><svg viewBox="0 0 76 76"><path fill="#fbfbf8" d="M6 10l54-9 10 64-53 9z"/><path fill="#fad648" d="M6 8l54-8 2 11-53 9z"/><g stroke="#c9c9c9" stroke-width="1.500"><path d="M11 27l53-9M12 34l53-9M13 41l53-9M14 48l53-9M15 55l53-9M16 62l53-9"/></g></svg></div>
  <div class="app"><svg viewBox="0 0 76 76"><path fill="#f4f2ec" d="M2 14l58-9 10 58-60 9z"/><path fill="#f9a6b4" d="M6 40l6-1 5 30-6 1z"/><path fill="#fbc65a" d="M6 24l20 26 24-18 16 10-4 8-14-8-24 20L8 40z"/><path fill="#91c96d" d="M24 11l33-5 6 40Q34 40 24 11z"/><path fill="none" stroke="#f4f2ec" stroke-width="5" d="M38 8q2 20 24 28"/><path fill="#4e9ee7" d="M14 13l8-1 6 57-7 1z"/><circle cx="24" cy="46" r="9" fill="#1f6fd6"/><path fill="#fff" d="M24 39l5 12-5-3-5 3z"/><circle cx="59" cy="52" r="18" fill="#f3f4f5"/><circle cx="59" cy="53" r="10" fill="none" stroke="#5b7fa2" stroke-width="1.500"/><path fill="#e0453a" d="M59 37l2.500 4h-5z"/><text x="59" y="57" text-anchor="middle" font-family="Liberation Sans" font-size="10" fill="#444">3D</text></svg></div>
  <div class="app"><svg viewBox="0 0 76 76"><circle cx="38" cy="38" r="35" fill="#f2f1ee"/><g fill-opacity=".85"><rect x="29" y="8" width="18" height="27" rx="9" fill="#f3a13c"/><rect x="29" y="8" width="18" height="27" rx="9" fill="#e8df47" transform="rotate(45 38 38)"/><rect x="29" y="8" width="18" height="27" rx="9" fill="#a4cb55" transform="rotate(90 38 38)"/><rect x="29" y="8" width="18" height="27" rx="9" fill="#5fae8b" transform="rotate(135 38 38)"/><rect x="29" y="8" width="18" height="27" rx="9" fill="#76aee0" transform="rotate(180 38 38)"/><rect x="29" y="8" width="18" height="27" rx="9" fill="#8d80c4" transform="rotate(225 38 38)"/><rect x="29" y="8" width="18" height="27" rx="9" fill="#c07fb5" transform="rotate(270 38 38)"/><rect x="29" y="8" width="18" height="27" rx="9" fill="#e2483c" transform="rotate(315 38 38)"/></g></svg></div>
  <div class="app"><svg viewBox="0 0 76 76"><path fill="#59a9f8" d="M38 5q36 2 35 32Q70 64 38 65q-5 0-10-1-6 6-14 6 5-6 4-11Q3 50 3 36 4 6 38 5z"/><path fill="#eaf4fd" d="M52 34q19 1 20 18 0 8-6 13l3 8q-5-1-8-4-28 4-29-17 1-16 20-18z"/><g fill="#2c5ba5"><circle cx="42" cy="52" r="3.500"/><circle cx="52" cy="52" r="3.500"/><circle cx="62" cy="52" r="3.500"/></g></svg></div>
  <div class="app run"><svg viewBox="0 0 76 76"><circle cx="38" cy="38" r="34" fill="url(#gBlue)" stroke="#e2e4e6" stroke-width="3"/><path stroke="#fff" stroke-width="6" stroke-linecap="round" d="M36 16l20 38M41 17L25 46M17 45h26M52 45h8M23 52l-2 3"/></svg><em>8</em></div>
  <div class="app"><svg viewBox="0 0 76 76"><rect x="3" y="4" width="70" height="66" rx="4" fill="url(#gGear)" stroke="#777" stroke-width="1"/><circle cx="38" cy="37" r="29" fill="#262626"/><circle cx="38" cy="37" r="24" fill="none" stroke="#b7babc" stroke-width="6" stroke-dasharray="3 2"/><circle cx="38" cy="37" r="19" fill="#333" stroke="#b3b6b8" stroke-width="5"/><path stroke="#b7babc" stroke-width="4" d="M38 37h20M38 37L28 20M38 37L28 54"/><circle cx="38" cy="37" r="5" fill="#b7babc"/></svg><em>1</em></div>
  <div class="app run"><svg viewBox="0 0 76 76"><path fill="#2b2b2e" d="M5 7l53-8 10 66-50 10z"/><path fill="#2f87d0" d="M48 4l16 6 9 44-12 9-10-6z"/><path fill="#3f9be0" d="M23 53l40 4-12 8z"/><path fill="none" stroke="#3e8fd6" stroke-width="6" d="M41 17L15 44M16 26l26 16"/><path stroke="#2f7ec6" stroke-width="6" d="M42 16l5 32"/></svg></div>
  <div class="app run"><svg viewBox="0 0 76 76"><circle cx="38" cy="38" r="37.500" fill="#db4e41"/><path fill="#4a9e54" d="M5 20l19 26 14 10-2 19.500Q4 73 1 42q0-12 4-22z"/><path fill="#f6c84c" d="M38 21h33.500q6 14 2.500 27-8 26-38 27.500L52 48z"/><circle cx="38" cy="38" r="17" fill="#fff"/><circle cx="38" cy="38" r="13.500" fill="#4c86f0"/></svg></div>
  <div class="app run"><svg viewBox="0 0 76 76"><rect x="3" y="6" width="70" height="63" rx="3" fill="#1d262c" stroke="#0c0f12" stroke-width="1.500"/><path fill="#e6e3e5" d="M3 8q0-3 3-3h64q3 0 3 3v5H3z"/><text x="7" y="38" font-family="DejaVu Sans Mono" font-weight="700" font-size="20" fill="#52dd3c">$</text><path fill="#2b7323" d="M24 18h10v22H24z"/></svg></div>
  <div class="app run"><svg viewBox="0 0 76 76"><circle cx="38" cy="38" r="35" fill="#f9f9f9"/></svg><svg class="inset"><use href="#slackmark"/></svg><em>•</em></div>
  <i class="dock-sep short"></i>
  <div class="app run wide"><svg viewBox="0 0 82 82"><circle cx="41" cy="41" r="41" fill="#fff"/><path fill="#322018" d="M11 15q4-4 10-3 7 1 7 8 0 8 2 18 3 18 17 28l3 6q-12 2-22-8Q11 46 10 22z"/><path fill="#322018" d="M36 17q5-7 12-8 8 1 13 6l-1 8 3 6q-3 14 1 24 2 8-1 14l3 5H42q6-6 4-14-8-16-3-30z"/><path fill="#8f7763" d="M34 26q4-6 9-8l4 8q-8 14-6 26l3 16q-14-4-13-18 0-14 3-24z"/><path fill="none" stroke="#322018" stroke-width="1.800" d="M38 17l6-6 5-2M33 26l9-11q-1 8 2 11"/><ellipse cx="57" cy="17" rx="5" ry="3" fill="#1b100b"/><path fill="#c9b9a5" d="M47 22q6 8 12 5l-2 5q-8 0-10-10z"/></svg></div>
  <div class="app run"><svg viewBox="0 0 76 76"><path fill="#bfc3c5" stroke="#878c8f" stroke-width="1.500" d="M6 16h46l3 48H3z"/><path fill="#a4a9ac" d="M2 62h54v9H2z"/><circle cx="30" cy="42" r="17" fill="#d5d8da" stroke="#a6aaad"/><circle cx="30" cy="42" r="8" fill="#aaaeb0"/><path stroke="#888" d="M8 26h30"/><path fill="none" stroke="#262626" stroke-width="4" d="M20 22Q16 4 24 8q8 6 5 22"/><circle cx="29" cy="32" r="5" fill="#eee" stroke="#222" stroke-width="2"/><path fill="none" stroke="#b9bdc0" stroke-width="2" d="M51-1Q40 8 42 22q2 12 16 14M68-1q12 0 10 16Q76 30 62 36"/><path fill="none" stroke="#262626" stroke-width="4" d="M66 38q2 14-6 14-6-2-8-10"/><path stroke="#222" stroke-width="4" d="M50-2h5M65-2h5"/><path stroke="#222" stroke-width="7" stroke-dasharray="2 1.500" d="M27 67h18"/></svg></div>
  <div class="app run"><svg viewBox="0 0 76 76"><rect x="4" y="6" width="68" height="62" rx="3" fill="#142422" stroke="#9aa1a4" stroke-width="2.500"/><rect x="6" y="8" width="64" height="58" fill="none" stroke="#060a0a" stroke-width="3"/><path stroke="#386a5c" stroke-width="1" d="M8 17h60M8 27h60M8 37h60M8 47h60M8 57h60M18 8v58M28 8v58M38 8v58M48 8v58M58 8v58"/><path fill="none" stroke="#7fe3c6" stroke-width="2" d="M9 42h18l3 4 3-30 2 34 4-10 6 2 4-12 4 12 5-4 4 4h4"/></svg></div>
  <div class="app run"><svg viewBox="0 0 76 76"><path fill="#f3f0ea" d="M10 6h60v36H10z"/><path fill="#a98a5a" d="M12 8h56v32H12z"/><path fill="#f8f8f8" d="M0 19l56-11 6 48-54 12z"/><path fill="url(#gPhoto)" d="M3 21l50-10 6 43-50 11z"/><path fill="#776551" d="M46 50h28l-2 18q-12 6-24 0z"/><circle cx="60" cy="47" r="14" fill="#7a6a56" stroke="#c5c8ca" stroke-width="3"/><path fill="#3c3a38" d="M48 48q12-8 24 0-4 10-12 10t-12-10z"/></svg></div>
  <div class="app run"><svg viewBox="0 0 76 76"><rect x="7" y="4" width="62" height="68" rx="9" fill="#2f79b9" stroke="#bdd6ea" stroke-width="2" transform="rotate(-7 38 38)"/><path fill="#fff" d="M14 19q0-3 3-3l13-3q4 0 4 3l5 41q0 3-3 3l-13 3q-4 0-4-3zM42 16q0-3 3-4l13-2q4 0 4 3l3 21q0 3-3 4l-13 2q-4 0-4-3z"/></svg></div>
  <i class="dock-sep"></i>
  <div class="app file"><svg viewBox="0 0 76 76"><path fill="#d9d9d9" d="M15-4h26l14 18v40H15z"/><path fill="#ececec" stroke="#ccc" d="M12 0h28l18 18v40H12z"/><path fill="#fcfcfc" stroke="#ccc" d="M10 4h30q2 16 18 22 4 8 4 20v27H10z"/><path fill="#8a62b4" d="M33 24h8l-2 25h-4z"/><circle cx="36" cy="55" r="4.500" fill="#8a62b4"/><path fill="none" stroke="#2f83cf" stroke-width="5" d="M64 50v26L50 62M64 56L50 70"/></svg></div>
  <div class="app thumb"><svg viewBox="0 0 76 76"><path fill="#f5f5f5" d="M0 2h76v71H0z"/><path fill="#e3e3e3" d="M0 2h76v5H0zM3 12h12v56H3z"/><path stroke="#aaa" stroke-width="1.500" stroke-dasharray="5 1" d="M28 12h38M28 17h38M28 22h30M28 34h38M28 39h38M28 44h38M28 49h38M28 54h38M28 59h24M28 64h24"/><path stroke="#666" stroke-width="2" d="M34 28h26"/></svg><svg class="badge"><use href="#previewmini"/></svg></div>
  <div class="app thumb"><svg viewBox="0 0 76 76"><path fill="#5dbb63" d="M0 20h76v34H0z"/><path fill="#f3f5ee" d="M0 23h76v2H0zM0 26h12v28H0zM15 27h24v8H15zM42 26h12v22H42zM58 26h18v28H58z"/></svg><svg class="badge" viewBox="0 0 30 30"><rect x="3" y="2" width="24" height="26" rx="4" fill="#2f79b9"/><path fill="#fff" d="M7 6h7v17H7zM17 6h7v10h-7z"/></svg></div>
  <div class="app thumb"><svg viewBox="0 0 76 76"><path fill="#f2f2f2" d="M0 15h76v44H0z"/><path fill="#2e6b31" d="M0 17h12v8H0zM70 17h6v10h-6z"/><path fill="#c43a2e" d="M20 22h6v6h-6zM48 22h6v6h-6z"/><path fill="#3873b8" d="M20 30h6v5h-6zM48 30h6v5h-6zM20 45h6v6h-6z"/><path fill="#cc8d26" d="M20 38h6v5h-6z"/><path fill="#333" d="M48 38h6v5h-6zM16 54h20v4H16z"/><path stroke="#bbb" d="M30 24h14M30 32h14M30 40h14M30 48h14M57 24h12M57 32h12M57 40h12"/></svg><svg class="badge"><use href="#previewmini"/></svg></div>
  <div class="app thumb"><svg viewBox="0 0 76 76"><path fill="#eee" d="M0 6h76v62H0z"/><path fill="#2b1716" d="M16 10h60v58H16z"/><g fill="none" stroke="#b5392d" stroke-dasharray="3 2"><circle cx="46" cy="40" r="6" stroke-width="4"/><circle cx="46" cy="36" r="13" stroke-width="4"/><circle cx="46" cy="36" r="22" stroke-width="5"/></g><path fill="#181818" d="M16 45h60v23H16z"/><text x="46" y="52" text-anchor="middle" font-family="Liberation Sans" font-size="6" fill="#bbb">PRACTICAL</text><text x="18" y="58" font-family="Liberation Sans" font-weight="700" font-size="7" fill="#fff">OBJECT-OR</text><text x="34" y="65" font-family="Liberation Sans" font-weight="700" font-size="7" fill="#ddd">DESI</text><path fill="#7c2e2b" d="M3 12h10v12H3z"/></svg><svg class="badge"><use href="#previewmini"/></svg></div>
  <div class="app thumb"><svg viewBox="0 0 76 76"><path fill="#f7f7f7" d="M0 10h76v53H0z"/><path fill="#e3e3e3" d="M0 10h76v4H0zM2 18h8v40H2z"/><path stroke="#8d97cf" stroke-width="1.200" d="M24 20h40M24 26h20M26 31h40M26 47h20M26 55h36"/><path stroke="#bbb" stroke-dasharray="6 1" d="M26 35h40M26 39h40M26 43h36M26 51h36"/></svg><svg class="badge"><use href="#previewmini"/></svg></div>
  <div class="app thumb"><svg viewBox="0 0 76 76"><path fill="#fafafa" d="M0 19h76v36H0z"/><path fill="#41193f" d="M0 19h14v36H0z"/><path fill="#59b9e9" d="M14 23h62v2H14z"/><path fill="#4468c8" d="M20 33h14v5H20z"/><path stroke="#aaa" d="M20 30h30M20 42h38M20 48h30"/></svg><svg class="badge" viewBox="0 0 54 54"><circle cx="27" cy="27" r="27" fill="#fff"/><use href="#slackmark" x="9" y="9" width="36" height="36"/></svg></div>
  <div class="app trash"><svg viewBox="0 0 76 76"><path fill="#d6d6d6" d="M10 10h56l-7 60q-21 8-42 0z"/><path fill="#eee" d="M20 18h12l2 50q-8 0-12-2zM44 18h12l-5 48-8 2z" fill-opacity=".7"/><ellipse cx="38" cy="12" rx="28" ry="7" fill="#8a8a8a" stroke="#ececec" stroke-width="2"/><path fill="#f1f1f1" d="M18 9L32-2l8 8 14-6 6 12-20 6z"/><path fill="#4a6d8c" d="M32 10l8-6 2 9zM48 7l7 4-8 4z"/><path fill="#b34c38" d="M26 12l6-3 2 6z"/></svg></div>
</section>
</body>
</html>
```
FILE: styles.css
```css
* { box-sizing: border-box; }
body { margin: 0; width: 3360px; height: 2100px; overflow: hidden; position: relative; background: #000; font-family: "Open Sans", sans-serif; color: #555; }
h2, h3, p { margin: 0; font-weight: 400; }
svg { flex: none; display: block; }
.sprite { position: absolute; width: 0; height: 0; }
.win { position: absolute; overflow: hidden; }

/* macOS menu bar */
.menubar { display: flex; align-items: center; height: 44px; background: #acacac; font: 26.500px/44px Inter, sans-serif; color: #000; white-space: nowrap; }
.apple-logo { margin: -5px 0 0 41px; }
.menus { display: flex; gap: 39px; margin-left: 41px; width: 2008px; letter-spacing: .08px; }
.menus b { font-weight: 700; letter-spacing: .5px; }
.status { display: grid; align-items: center; grid-template-columns: 57px 54px 72px 77px 49px 62px 63px 69px 80px 205px 253px 64px 56px 40px; }
.battery-pct { font-size: 24px; letter-spacing: -.6px; }
.clock { letter-spacing: .6px; }
.user { font-weight: 500; letter-spacing: .5px; }

/* window behind the browser */
.back-window { left: 0; top: 46px; width: 3360px; height: 1950px; border-radius: 14px 14px 16px 16px; background: linear-gradient(90deg, #f0f0f0, #c9c9c9 40px); }
.back-tabs { display: flex; height: 84px; background: linear-gradient(#e4e8eb, #d2d6da 40px); border-top: 2px solid #f1f3f4; }
.back-tabs > span { width: 304px; padding: 32px 0 0 32px; position: relative; }
.back-tabs > span:nth-of-type(1) { width: 157px; }
.back-tabs > span:nth-of-type(n+2)::after { content: ""; position: absolute; right: 0; top: 29px; width: 2px; height: 40px; background: #a3a6a9; }
.back-tabs > span.last::after, .back-tabs > span.front::after { display: none; }
.back-tabs > span:nth-of-type(n+6) { width: 302.500px; }
.back-tabs > .front { margin-top: 14px; background: #f3f3f3; border-radius: 16px 16px 0 0; padding-top: 18px; }
.back-light { position: absolute; left: 26px; top: 30px; width: 24px; height: 24px; border-radius: 50%; background: #cfcfcf; border: 1px solid #b5b5b5; box-shadow: 40px 0 #cfcfcf, 80px 0 #cfcfcf; }
.peek { display: block; width: 20px; height: 20px; border-radius: 50%; margin-left: -4px; }
.dark { background: #151515; } .red { border: 3px solid #d3513f; margin-top: 1px; } .blue { background: #3a7ce0; margin-top: 1px; width: 10px; } .white { background: #f5f5f5; border-radius: 0; width: 28px; } .crimson { background: #a3163a; margin: 2px 0 0 -6px; border-radius: 0; width: 24px; }
.back-tools { height: 138px; padding-left: 30px; background: linear-gradient(90deg, #fafafa, #dedede 40px); }
.back-dark { height: 80px; background: #1c1c1c; border-top: 2px solid #888; }

.terminal { left: 0; top: 346px; width: 900px; height: 1175px; background: #000; border-radius: 12px; box-shadow: 0 0 30px rgba(0,0,0,.5); }
.term-title { height: 44px; background: linear-gradient(90deg, #eee, #c5c5c5 40px); }
.term-title i { display: block; width: 24px; height: 24px; border-radius: 50%; background: #c9c9c9; border: 1px solid #aaa; margin-left: 16px; transform: translateY(10px); }
.term-tab { height: 44px; padding: 14px 16px; background: linear-gradient(90deg, #aaa, #8c8c8c 40px); }
.terminal pre { margin: 6px 0 0 10px; font: 24px/34.100px "DejaVu Sans Mono", monospace; color: #0325a6; }
.cursor { display: block; width: 14px; height: 33px; margin: -3px 0 0 10px; border: 2px solid #aaa; }

/* browser frame */
.browser { left: 40px; top: 84px; width: 3320px; height: 1910px; border-radius: 12px; background: #fff; box-shadow: 0 0 0 1px rgba(70,70,70,.45), 0 4px 30px rgba(0,0,0,.4); }
.tabstrip { display: flex; height: 84px; background: #dee1e6; border-top: 2px solid #eef0f2; font: 24px Inter, sans-serif; color: #44474b; }
.lights { display: flex; gap: 16px; padding: 29px 0 0 26px; width: 163px; }
.lights i { width: 24px; height: 24px; border-radius: 50%; }
.lights .r { background: #ee6a5f; border: 1px solid #d65549; } .lights .y { background: #f5bf4f; border: 1px solid #d9a23c; } .lights .g { background: #61c554; border: 1px solid #4ba73f; }
.tab { display: flex; align-items: center; flex: none; width: 128px; height: 64px; margin-top: 16px; padding-left: 14px; position: relative; }
.tab svg { width: 32px; height: 32px; }
.tab span { width: 48px; height: 32px; line-height: 31px; margin-left: 16px; overflow: hidden; white-space: nowrap; letter-spacing: -.4px; -webkit-mask-image: linear-gradient(90deg, #000 50%, transparent); mask-image: linear-gradient(90deg, #000 50%, transparent); }
.tab::after { content: ""; position: absolute; right: 0; top: 13px; width: 2px; height: 40px; background: #a7abb0; }
.narrow { width: 126px; }
.pinned { width: 71px; }
.before { width: 125px; }
.before::after, .current::after { display: none; }
.tab.current { height: 70px; margin-top: 14px; width: 127px; padding-bottom: 2px; background: #fff; border-radius: 16px 16px 0 0; }
.tab.current::before { content: ""; position: absolute; left: -16px; right: -16px; bottom: 0; height: 16px; background: radial-gradient(circle at 0 0, transparent 16px, #fff 16px) left / 16px 16px no-repeat, radial-gradient(circle at 100% 0, transparent 16px, #fff 16px) right / 16px 16px no-repeat; }
.tab.current span { width: 14px; }
.tab.current .close { width: 17px; height: 17px; margin-left: 9px; }
.plus { margin: 36px 0 0 32px; }
.toolbar { display: flex; align-items: center; height: 72px; padding: 0 0 0 30px; }
.toolbar > svg { margin-right: 36px; }
.omnibox { display: flex; align-items: center; width: 1774px; height: 56px; margin-left: -5px; padding: 0 22px 0 27px; border-radius: 28px; background: #f1f3f4; font: 28px Inter, sans-serif; color: #5f6368; }
.omnibox p { flex: 1; margin-left: 22px; }
.omnibox b { font-weight: 400; color: #202124; }
.omnibox span { color: #80868b; }
.extensions { display: flex; gap: 32px; margin-left: 28px; }
.extensions svg { width: 32px; height: 32px; }
.tool-sep { width: 2px; height: 32px; margin-left: 27px; background: #ccc; }
.profile { width: 40px; height: 40px; margin: 0 41px 0 24px; border-radius: 50%; background: #d94f80; color: #fff; text-align: center; font: 22px/40px Roboto, sans-serif; }
.toolbar > svg:last-child { margin-right: 0; }
.bookmarks { display: flex; height: 67px; padding: 0 0 8px 28px; border-bottom: 2px solid #b6b6b6; font: 24px Inter, sans-serif; color: #3c4043; }
.bm { display: flex; align-items: center; flex: none; width: 308px; white-space: nowrap; letter-spacing: -.08px; }
.bm svg { width: 32px; height: 32px; margin-right: 16px; }
.apps { width: 138px; padding-left: 2px; } .apps svg { width: 28px; height: 28px; margin-right: 18px; }
.jira { width: 276px; } .imported { width: 184px; }
.more { margin: auto 0 auto auto; padding-right: 38px; }

/* New Relic header */
.topnav { display: flex; height: 89px; background: #464646; color: #fff; font-size: 24px; line-height: 87px; }
.brand { display: flex; align-items: center; width: 350px; padding-left: 30px; color: #e3e3e3; }
.brand b { margin-left: 12px; font-size: 34px; line-height: 80px; padding-bottom: 5px; font-weight: 600; letter-spacing: -.9px; }
.brand small { font-size: 10px; align-self: end; line-height: 60px; }
.topnav nav { display: flex; }
.topnav nav a { padding: 0 19.100px; }
.topnav nav .on { background: #4b8696; }
.utils { display: flex; margin-left: auto; color: #eee; }
.utils > a { display: flex; align-items: center; padding: 0 23.500px 0 25px; border-right: 3px solid #595959; }
.utils > a:nth-child(2) { padding-right: 22.500px; }
.utils a svg { margin-left: 8px; margin-right: -4px; }
.account { display: flex; align-items: center; width: 561px; padding-left: 26px; color: #ccc; line-height: 84px; }
.account span { padding-bottom: 3px; }
.account > svg:last-child { margin: 0 33px 0 auto; color: #eee; }
.subnav { display: flex; gap: 48px; height: 72px; padding-left: 24px; background: #595959; border-bottom: 2px solid #464646; color: #eee; font-size: 24px; line-height: 70px; }

.content { display: flex; height: 1242px; }
aside { width: 402px; padding: 43px 0 0 40px; background: #e9e9e9; border-right: 2px solid #d0d0d0; font-size: 28px; line-height: 72px; }
aside h3 { font-size: 28px; color: #8b8b8b; }
aside a { display: block; padding-left: 40px; }
aside .second { margin-top: 36px; }
article { width: 1840px; margin-left: 1040px; }
.ticks { font: 24px "Open Sans", sans-serif; letter-spacing: .2px; fill: #7d7d7d; text-anchor: middle; }
.legend { width: 96px; height: 36px; margin-top: 4px; background: #8fcfe0; text-align: center; font-size: 24px; line-height: 34px; }
.section-head { display: flex; justify-content: space-between; padding: 98px 10px 0 0; height: 196px; }
.section-head h2 { font-size: 36px; line-height: 46px; margin-left: -1px; }
.section-head p { font-size: 28px; line-height: 32px; margin-left: -1px; color: #8b8b8b; }
.search { display: flex; align-items: center; justify-content: space-between; width: 454px; height: 54px; margin-top: 10px; padding: 0 10px 0 9px; border: 2px solid #cacaca; font-size: 28px; color: #767676; }
.table { width: 1838px; font-size: 28px; line-height: 40px; }
.tr { display: grid; grid-template-columns: 458px 1142px 238px; height: 196px; border-bottom: 2px solid #dcdcdc; }
.head { height: 76px; }
.head > div { display: flex; align-items: center; justify-content: space-between; margin-right: 2px; padding: 0 4px 0 6px; background: #f0f0f0; }
.head .down { margin-top: 16px; }
.head .srv { justify-content: flex-end; gap: 19px; color: #8b8b8b; }
.date { background: #f0f0f0; color: #aaa; line-height: 194px; padding-left: 8px; margin-right: 2px; }
.alt { background: #f0f0f0; } .alt .date { background: #e8e8e8; }
.det { padding: 17px 0 0 6px; white-space: nowrap; margin-left: 0; }
.det a, .ms { color: #34668f; }
.ms { text-align: right; line-height: 194px; padding-right: 10px; }

.kiosk { display: flex; align-items: center; justify-content: flex-end; height: 60px; border: 2px solid #d1d1d1; border-top-width: 4px; padding-right: 28px; font-size: 28px; color: #8b8b8b; }
.kiosk span { margin-left: 10px; }
.kiosk .permalink { margin-left: 63px; }
footer { display: flex; align-items: center; height: 152px; padding: 4px 0 0 961px; background: #e9e9e9; font-size: 24px; }
.links { display: flex; gap: 30.400px; width: 751px; letter-spacing: -.03px; }
.fb { margin-left: 46px; }
.store { display: flex; align-items: center; width: 136px; height: 40px; margin-left: 88px; padding-left: 11px; border-radius: 4px; background: #979797; color: #fff; font-size: 18px; font-weight: 600; line-height: 19px; fill: #fff; }
.store p { margin-left: 10px; font-weight: 600; white-space: nowrap; letter-spacing: -.3px; }
.store small { display: block; font-size: 10px; line-height: 12px; letter-spacing: 0; }
.play { width: 116px; margin-left: 32px; padding-left: 4px; }
.play p { margin-left: 4px; font-family: "Liberation Serif", serif; font-weight: 400; font-size: 18px; letter-spacing: -.5px; }
.play small { font-family: "Open Sans", sans-serif; font-size: 9px; }
.copy { margin-left: 77px; letter-spacing: -.02px; }
.metrics { display: flex; align-items: center; height: 72px; padding-left: 1314px; background: linear-gradient(#5d5d5d, #575757); color: #9d9d9d; font-size: 24px; border-bottom: 1px solid #777; }
.health { width: 28px; height: 72px; background: #d3dcc0; }
.env { margin-left: 28px; width: 223px; font-size: 28px; color: #fff; }
.line { width: 2px; height: 72px; margin-right: 39px; background: #aaa; }
.metrics p, .env { transform: translateY(-1px); }
.metrics p { margin-right: 22px; white-space: nowrap; }
.metrics b { font-weight: 400; font-size: 28px; color: #fff; }
.metrics p + svg { margin-left: -10px; }

/* desktop labels and dock */
.desktop-label { position: absolute; top: 1996px; display: flex; flex-direction: column; text-align: center; font: 600 24px/31px Inter, sans-serif; color: #ddd; }
.desktop-label span:first-child { color: #929292; }
.one { left: 3052px; text-align: left; }
.two { left: 3100px; width: 257px; white-space: nowrap; }
.two span:first-child { margin-left: 2px; letter-spacing: .2px; }
.dock { position: absolute; left: 302px; top: 1996px; width: 2756px; height: 104px; display: flex; padding: 11px 0 0 6px; border-radius: 12px 12px 0 0; background: linear-gradient(90deg, #4b4b4b 0, #4d4d4d 15%, #666 18%, #a4a4a4 21%, #b1b1b1 23%, #7e7a7b 26%, #6a6667 29%, #635f60 36%, #595959 44%, #5a5a5a); }
.app { width: 86px; height: 93px; flex: none; position: relative; display: flex; justify-content: center; }
.app > svg { width: 76px; height: 76px; overflow: visible; }
.run::after { content: ""; position: absolute; left: 38px; bottom: 5px; width: 8px; height: 8px; border-radius: 50%; background: #0a0a0a; }
.wide > svg { width: 82px; height: 82px; margin-top: -4px; }
.app .inset { position: absolute; left: 19px; top: 13px; width: 48px; height: 48px; }
.app em { position: absolute; right: -2px; top: -4px; width: 31px; height: 31px; border-radius: 50%; background: #de4b3f; color: #fff; text-align: center; font: 20px/31px Inter, sans-serif; }
.app .badge { position: absolute; right: 4px; bottom: 12px; width: 30px; height: 30px; }
.dock-sep { width: 2px; height: 76px; margin: 2px 18px 0 19px; background: #333; }
.dock-sep.short { height: 52px; margin: 14px 18px 0 20px; }
.file { margin-left: 1px; }
```
